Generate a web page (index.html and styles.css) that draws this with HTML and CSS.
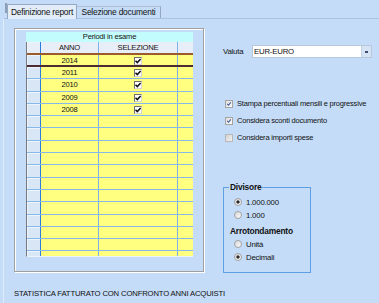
FILE: index.html
```html
<!DOCTYPE html>
<html lang="it">
<head>
    <meta charset="UTF-8">
    <title>Statistica fatturato</title>
    <link rel="stylesheet" href="styles.css">
</head>
<body>
    <div class="tabs">
        <span class="tab-grip"></span>
        <div class="tab active">Definizione report</div>
        <div class="tab">Selezione documenti</div>
    </div>

    <div class="panel">
        <div class="panel-main">
            <div class="grid-box">
                <div class="grid-caption">Periodi in esame</div>
                <div class="grid">
                    <div class="row head">
                        <div class="cell rh"></div><div class="cell">ANNO</div><div class="cell">SELEZIONE</div><div class="cell"></div>
                    </div>
                    <div class="row current">
                        <div class="cell rh"></div><div class="cell">2014</div><div class="cell"><span class="grid-check"><svg viewBox="0 0 8 8"><path d="M1.5 3.8 L3.3 5.6 L6.6 2"/></svg></span></div><div class="cell"></div>
                    </div>
                    <div class="row">
                        <div class="cell rh"></div><div class="cell">2011</div><div class="cell"><span class="grid-check"><svg viewBox="0 0 8 8"><path d="M1.5 3.8 L3.3 5.6 L6.6 2"/></svg></span></div><div class="cell"></div>
                    </div>
                    <div class="row">
                        <div class="cell rh"></div><div class="cell">2010</div><div class="cell"><span class="grid-check"><svg viewBox="0 0 8 8"><path d="M1.5 3.8 L3.3 5.6 L6.6 2"/></svg></span></div><div class="cell"></div>
                    </div>
                    <div class="row">
                        <div class="cell rh"></div><div class="cell">2009</div><div class="cell"><span class="grid-check"><svg viewBox="0 0 8 8"><path d="M1.5 3.8 L3.3 5.6 L6.6 2"/></svg></span></div><div class="cell"></div>
                    </div>
                    <div class="row">
                        <div class="cell rh"></div><div class="cell">2008</div><div class="cell"><span class="grid-check"><svg viewBox="0 0 8 8"><path d="M1.5 3.8 L3.3 5.6 L6.6 2"/></svg></span></div><div class="cell"></div>
                    </div>
                    <div class="row"><div class="cell rh"></div><div class="cell"></div><div class="cell"></div><div class="cell"></div></div>
                    <div class="row"><div class="cell rh"></div><div class="cell"></div><div class="cell"></div><div class="cell"></div></div>
                    <div class="row"><div class="cell rh"></div><div class="cell"></div><div class="cell"></div><div class="cell"></div></div>
                    <div class="row"><div class="cell rh"></div><div class="cell"></div><div class="cell"></div><div class="cell"></div></div>
                    <div class="row"><div class="cell rh"></div><div class="cell"></div><div class="cell"></div><div class="cell"></div></div>
                    <div class="row"><div class="cell rh"></div><div class="cell"></div><div class="cell"></div><div class="cell"></div></div>
                    <div class="row"><div class="cell rh"></div><div class="cell"></div><div class="cell"></div><div class="cell"></div></div>
                    <div class="row"><div class="cell rh"></div><div class="cell"></div><div class="cell"></div><div class="cell"></div></div>
                    <div class="row"><div class="cell rh"></div><div class="cell"></div><div class="cell"></div><div class="cell"></div></div>
                    <div class="row"><div class="cell rh"></div><div class="cell"></div><div class="cell"></div><div class="cell"></div></div>
                    <div class="row"><div class="cell rh"></div><div class="cell"></div><div class="cell"></div><div class="cell"></div></div>
                    <div class="row"><div class="cell rh"></div><div class="cell"></div><div class="cell"></div><div class="cell"></div></div>
                </div>
            </div>

            <div class="options">
                <div class="field-row">
                    <span class="field-label">Valuta</span>
                    <div class="combo">
                        <span class="combo-value">EUR-EURO</span>
                        <span class="combo-btn"><span class="combo-arrow"></span></span>
                    </div>
                </div>

                <div class="checks">
                    <div class="check-row">
                        <span class="checkbox"><svg viewBox="0 0 8 8"><path d="M1.6 3.9 L3.3 5.7 L6.4 1.8"/></svg></span>
                        Stampa percentuali mensili e progressive
                    </div>
                    <div class="check-row">
                        <span class="checkbox"><svg viewBox="0 0 8 8"><path d="M1.6 3.9 L3.3 5.7 L6.4 1.8"/></svg></span>
                        Considera sconti documento
                    </div>
                    <div class="check-row">
                        <span class="checkbox off"></span>
                        Considera importi spese
                    </div>
                </div>

                <fieldset class="group">
                    <legend>Divisore</legend>
                    <div class="radio-row"><span class="radio on"></span>1.000.000</div>
                    <div class="radio-row"><span class="radio"></span>1.000</div>
                    <div class="group-title">Arrotondamento</div>
                    <div class="radio-row"><span class="radio"></span>Unità</div>
                    <div class="radio-row"><span class="radio on"></span>Decimali</div>
                </fieldset>
            </div>
        </div>

        <div class="status">STATISTICA FATTURATO CON CONFRONTO ANNI ACQUISTI</div>
    </div>
</body>
</html>
```

FILE: styles.css
```css
body {
    font-family: 'Liberation Sans', Arial, sans-serif;
    margin: 0;
    padding: 0;
    width: 379px;
    height: 303px;
    overflow: hidden;
    background-color: #c4dcf7;
    color: #111;
    font-size: 7.6px;
    letter-spacing: -0.2px;
}

/* tab strip */
.tabs {
    display: flex;
    align-items: flex-end;
    height: 18px;
    padding-left: 5px;
    box-sizing: border-box;
}
.tab-grip {
    align-self: flex-start;
    width: 2px;
    height: 10px;
    margin-top: 3px;
    background: #8d9fb6;
}
.tab {
    width: 84px;
    height: 12px;
    box-sizing: border-box;
    border-top: 1px solid #aebfd6;
    border-right: 1px solid #95a8c2;
    font-size: 8.4px;
    line-height: 11px;
    text-align: center;
    white-space: nowrap;
}
.tab.active {
    position: relative;
    width: 70px;
    height: 15px;
    margin-bottom: -1px;
    background: #e2edf9;
    border: 1px solid #95a8c2;
    border-bottom: none;
    line-height: 14px;
}

/* panel */
.panel {
    margin-left: 3px;
    border-top: 1px solid #a9c3e2;
    border-left: 1px solid #e2edfa;
    height: 284px;
}
.panel-main {
    display: flex;
    padding: 9px 0 0 10px;
}

/* grid */
.grid-box {
    width: 190px;
    height: 244px;
    box-sizing: border-box;
    padding: 3px 10px 0 11px;
    border: 1px solid #a0a0a0;
    box-shadow: inset 1px 1px 0 #fff, 1px 1px 0 #fff;
}
.grid-caption {
    width: 167px;
    height: 10px;
    line-height: 10px;
    background: #c2fcfc;
    text-align: center;
}
.grid {
    width: 167px;
    height: 215px;
    box-sizing: border-box;
    overflow: hidden;
    border-left: 1px solid #7a7a7a;
    border-bottom: 1px solid #eaf2fb;
}
.row {
    display: grid;
    grid-template-columns: 14px 58px 79px 1fr;
    height: 12.3px;
    box-sizing: border-box;
    border-bottom: 1px solid #86b9ea;
}
.row.head {
    height: 13px;
    border-bottom: 2px solid #9b5b2b;
}
.row.current {
    height: 12px;
    border-bottom: 2px solid #4d2b33;
}
.cell {
    background: #ffff80;
    border-right: 1px solid #7fb2e6;
    text-align: center;
    line-height: 11px;
    overflow: hidden;
}
.cell:last-child {
    border-right: none;
}
.cell.rh {
    background: #d9e6f6;
    border-right-color: #2a7de0;
    box-shadow: inset 1px 1px 0 #eef4fc;
}
.row.head .cell {
    background: #e7eef8;
    line-height: 11px;
}
.grid-check {
    display: inline-block;
    width: 8px;
    height: 8px;
    box-sizing: border-box;
    margin-top: 2px;
    vertical-align: top;
    background: #fff;
    border-top: 1px solid #6f6f6f;
    border-left: 1px solid #6f6f6f;
    border-right: 1px solid #d4d4d4;
    border-bottom: 1px solid #d4d4d4;
}
.grid-check svg {
    display: block;
    width: 8px;
    height: 8px;
    margin: -1px 0 0 -1px;
}
.grid-check path {
    fill: none;
    stroke: #111;
    stroke-width: 1.5;
}

/* options */
.options {
    display: flex;
    flex-direction: column;
    margin-left: 19px;
    padding-top: 17px;
}
.field-row {
    display: flex;
    align-items: center;
    height: 13px;
    font-size: 7.8px;
}
.field-label {
    width: 29px;
}
.combo {
    display: flex;
    width: 120px;
    height: 13px;
    box-sizing: border-box;
    background: #fff;
    border: 1px solid #b7c8dc;
}
.combo-value {
    flex: 1;
    padding-left: 1px;
    line-height: 11px;
}
.combo-btn {
    display: flex;
    align-items: center;
    justify-content: center;
    width: 9px;
    background: #d5e3f4;
    border-left: 1px solid #c3d3e6;
}
.combo-arrow {
    width: 3px;
    height: 2px;
    background: #3d4f6a;
}

.checks {
    margin-top: 37px;
}
.check-row {
    display: flex;
    align-items: center;
    height: 17px;
    font-size: 7.5px;
}
.checkbox {
    width: 8px;
    height: 8px;
    box-sizing: border-box;
    margin: 0 4px 0 2px;
    border: 1px solid #a4a4a4;
    background: linear-gradient(135deg, #dedede, #fbfbfb);
}
.checkbox svg {
    display: block;
    width: 6px;
    height: 6px;
}
.checkbox path {
    fill: none;
    stroke: #3e5590;
    stroke-width: 1.4;
}
.checkbox.off {
    background: linear-gradient(135deg, #d2d2d2, #f2f2f2);
    border-color: #b8b8b8;
}

/* divisore */
.group {
    width: 88px;
    box-sizing: border-box;
    margin: 36px 0 0 0;
    padding: 3.5px 0 8px 5px;
    border: 1px solid #5f9fe4;
}
.group legend {
    padding: 0 1px;
    font-size: 8.4px;
    font-weight: bold;
    line-height: 10px;
}
.radio-row {
    display: flex;
    align-items: center;
    height: 13px;
    font-size: 7.8px;
}
.radio {
    width: 8px;
    height: 8px;
    box-sizing: border-box;
    margin: 0 4px 0 5px;
    border: 1px solid #a2a2a2;
    border-radius: 50%;
    background: linear-gradient(135deg, #d8d8d8, #fafafa);
}
.radio.on {
    background: radial-gradient(circle, #2b2b2b 0, #2b2b2b 1.4px, transparent 1.8px), linear-gradient(135deg, #d8d8d8, #fafafa);
}
.group-title {
    height: 13px;
    margin-top: 3px;
    margin-left: 1px;
    line-height: 13px;
    font-size: 8.4px;
    font-weight: bold;
}

.status {
    margin-top: 16px;
    padding-left: 10px;
    line-height: 10px;
    font-size: 7.7px;
    letter-spacing: -0.15px;
}
```
